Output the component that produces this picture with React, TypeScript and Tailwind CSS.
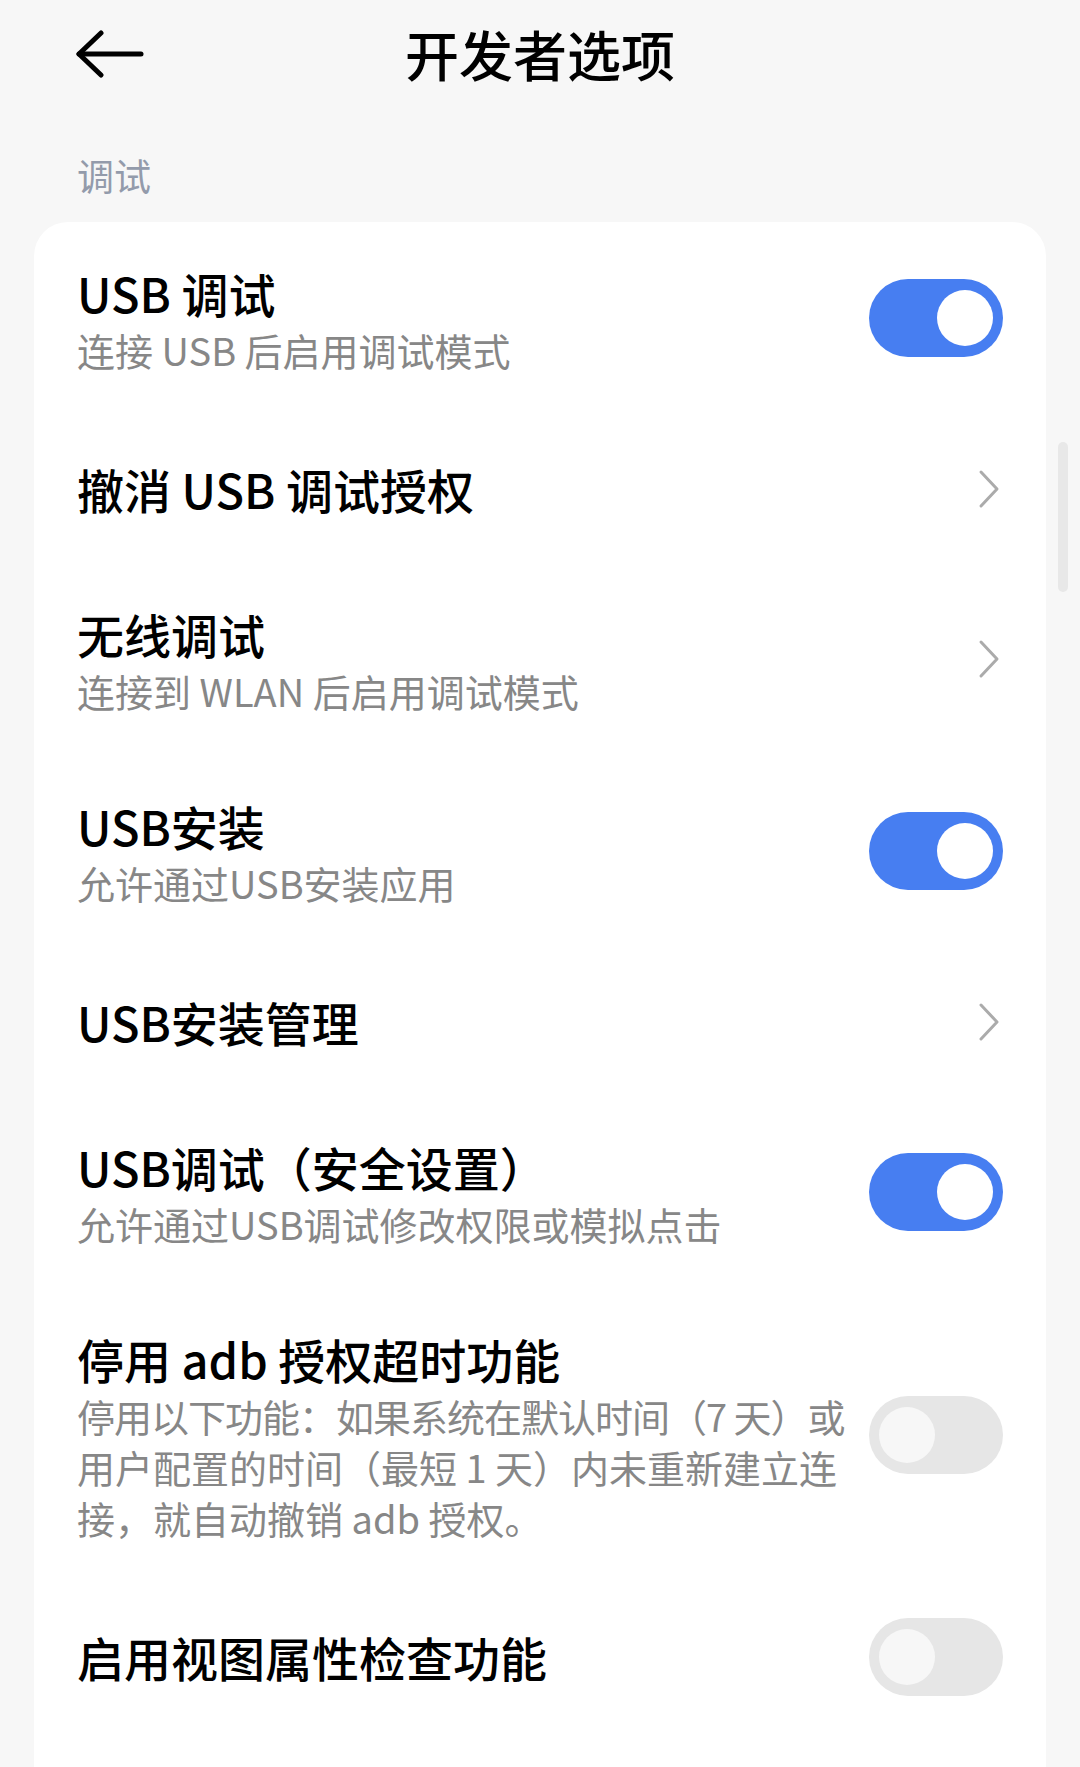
import React from "react";

const FONT = '"Noto Sans CJK SC", "Noto Sans", sans-serif';

function Toggle({ on }: { on: boolean }) {
  return (
    <div
      className={`shrink-0 w-[134px] h-[78px] rounded-full flex items-center px-[10px] ${
        on ? "bg-[#477ef1] justify-end" : "bg-[#e6e6e6] justify-start"
      }`}
    >
      <div className={`w-[56px] h-[56px] rounded-full ${on ? "bg-white" : "bg-[#f7f7f7]"}`} />
    </div>
  );
}

function Chevron() {
  return (
    <svg width="24" height="40" viewBox="0 0 24 40" className="shrink-0 mr-[2px]">
      <polyline points="4,3 20,20 4,37" fill="none" stroke="#ababab" strokeWidth="3" strokeLinecap="round" strokeLinejoin="round" />
    </svg>
  );
}

function Row({
  title,
  sub,
  right,
}: {
  title: string;
  sub?: React.ReactNode;
  right: React.ReactNode;
}) {
  if (!sub) {
    return (
      <div className="flex items-center justify-between min-h-[149px]">
        <div className="text-[47px] leading-[63px] font-medium text-black whitespace-nowrap">{title}</div>
        {right}
      </div>
    );
  }
  return (
    <div className="flex items-center justify-between py-[39px]">
      <div className="flex flex-col">
        <div className="text-[47px] leading-[63px] font-medium text-black whitespace-nowrap">{title}</div>
        <div className="text-[38px] leading-[51px] text-[#878787] whitespace-nowrap">{sub}</div>
      </div>
      {right}
    </div>
  );
}

export default function App() {
  return (
    <div
      className="relative w-[1080px] h-[1767px] overflow-hidden bg-[#f7f7f7]"
      style={{ fontFamily: FONT }}
    >
      {/* Header */}
      <div className="grid grid-cols-[1fr_auto_1fr] items-center h-[108px]">
        <div className="pl-[75px] flex items-center">
          <svg width="70" height="48" viewBox="0 0 70 48">
            <line x1="4" y1="24" x2="66" y2="24" stroke="#000" strokeWidth="5" strokeLinecap="round" />
            <polyline points="26,3 4,24 26,45" fill="none" stroke="#000" strokeWidth="5" strokeLinecap="round" strokeLinejoin="round" />
          </svg>
        </div>
        <div className="text-[54px] leading-[70px] font-medium text-black">开发者选项</div>
        <div />
      </div>

      {/* Section label */}
      <div className="pt-[42px] pl-[77px] h-[114px] text-[37px] leading-[50px] text-[#939bab]">调试</div>

      {/* Card */}
      <div className="mx-[34px] rounded-[34px] bg-white px-[43px] pb-[200px]">
        <Row title="USB 调试" sub="连接 USB 后启用调试模式" right={<Toggle on />} />
        <Row title="撤消 USB 调试授权" right={<Chevron />} />
        <Row title="无线调试" sub="连接到 WLAN 后启用调试模式" right={<Chevron />} />
        <Row title="USB安装" sub="允许通过USB安装应用" right={<Toggle on />} />
        <Row title="USB安装管理" right={<Chevron />} />
        <Row title="USB调试（安全设置）" sub="允许通过USB调试修改权限或模拟点击" right={<Toggle on />} />
        <Row
          title="停用 adb 授权超时功能"
          sub={
            <>
              <span className="tracking-[-1px]">停用以下功能：如果系统在默认时间（7 天）或</span>
              <br />
              用户配置的时间（最短 1 天）内未重新建立连
              <br />
              接，就自动撤销 adb 授权。
            </>
          }
          right={<Toggle on={false} />}
        />
        <Row title="启用视图属性检查功能" right={<Toggle on={false} />} />
      </div>

      {/* Scrollbar */}
      <div className="absolute left-[1058px] top-[442px] w-[10px] h-[150px] rounded-full bg-[#e8e8e8]" />
    </div>
  );
}
